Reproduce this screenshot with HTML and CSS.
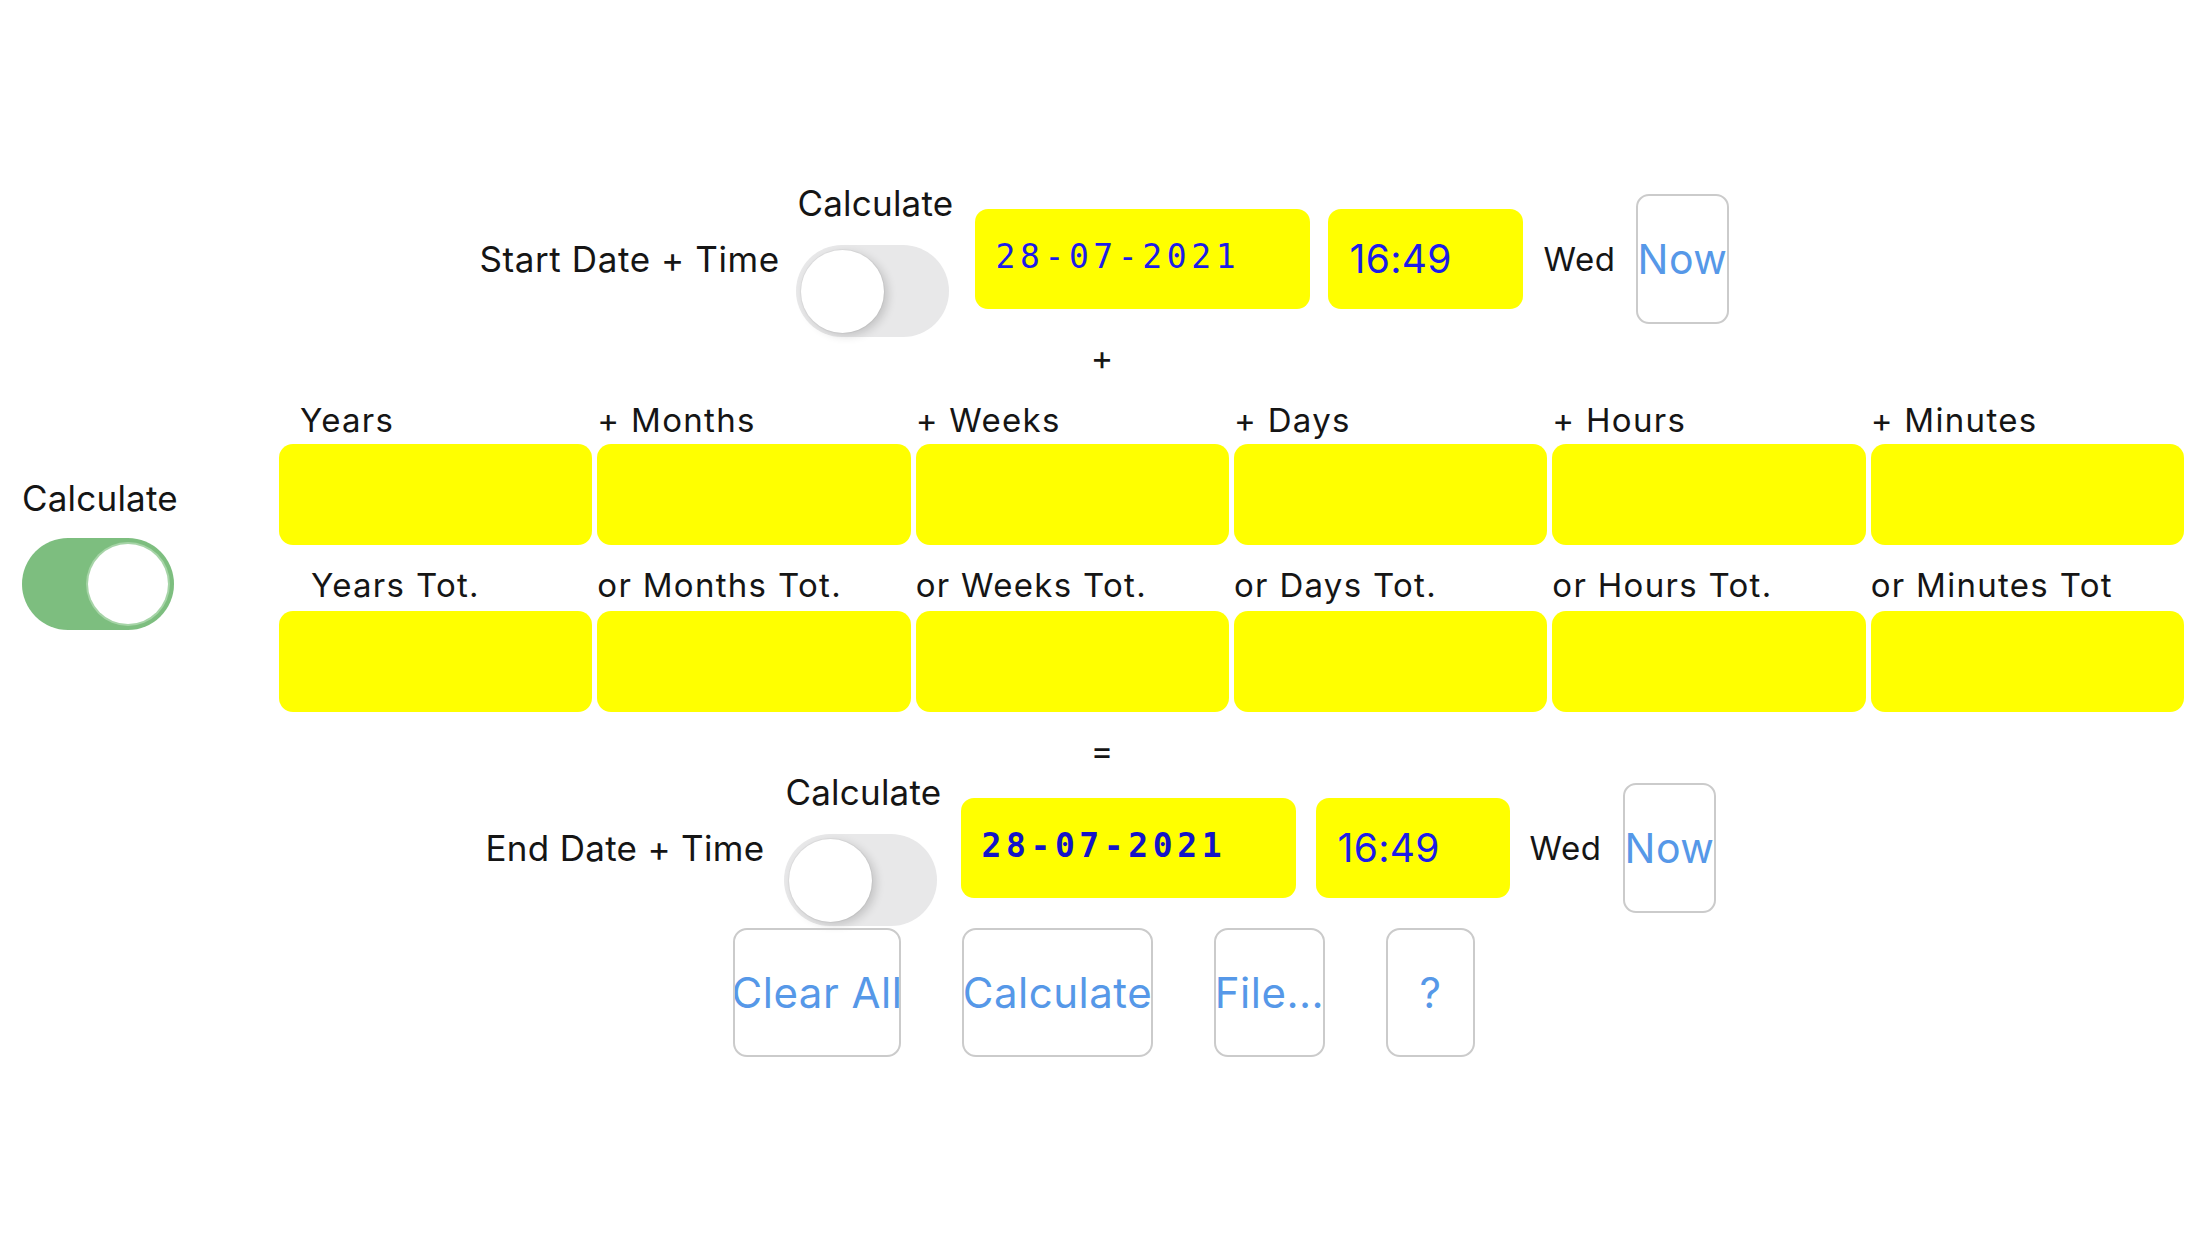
FILE: index.html
```html
<!DOCTYPE html>
<html lang="en">
<head>
<meta charset="utf-8">
<title>Date Calculator</title>
<link rel="stylesheet" href="styles.css">
</head>
<body>
<div class="page">
  <div class="dt-row start">
    <div class="dt-label">Start Date + Time</div>
    <div class="calc">
      <div class="calc-label">Calculate</div>
      <div class="switch"><span class="knob"></span></div>
    </div>
    <div class="date-box"><span class="date-text">28-07-2021</span></div>
    <div class="time-box"><span class="time-text">16:49</span></div>
    <div class="dow">Wed</div>
    <div class="now-btn"><span>Now</span></div>
  </div>

  <div class="op plus">+</div>

  <div class="dur">
    <div class="calc side">
      <div class="calc-label">Calculate</div>
      <div class="switch on"><span class="knob"></span></div>
    </div>
    <div class="grid">
      <div class="lbl first">Years</div>
      <div class="lbl">+ Months</div>
      <div class="lbl">+ Weeks</div>
      <div class="lbl">+ Days</div>
      <div class="lbl">+ Hours</div>
      <div class="lbl">+ Minutes</div>
      <div class="cell"></div>
      <div class="cell"></div>
      <div class="cell"></div>
      <div class="cell"></div>
      <div class="cell"></div>
      <div class="cell"></div>
      <div class="lbl tot firsttot">Years Tot.</div>
      <div class="lbl tot">or Months Tot.</div>
      <div class="lbl tot">or Weeks Tot.</div>
      <div class="lbl tot">or Days Tot.</div>
      <div class="lbl tot">or Hours Tot.</div>
      <div class="lbl tot">or Minutes Tot</div>
      <div class="cell"></div>
      <div class="cell"></div>
      <div class="cell"></div>
      <div class="cell"></div>
      <div class="cell"></div>
      <div class="cell"></div>
    </div>
  </div>

  <div class="op equals">=</div>

  <div class="dt-row end">
    <div class="dt-label">End Date + Time</div>
    <div class="calc">
      <div class="calc-label">Calculate</div>
      <div class="switch"><span class="knob"></span></div>
    </div>
    <div class="date-box"><span class="date-text bold">28-07-2021</span></div>
    <div class="time-box"><span class="time-text">16:49</span></div>
    <div class="dow">Wed</div>
    <div class="now-btn"><span>Now</span></div>
  </div>

  <div class="actions">
    <div class="btn w-clear"><span>Clear All</span></div>
    <div class="btn w-calc"><span>Calculate</span></div>
    <div class="btn w-file"><span>File...</span></div>
    <div class="btn w-help"><span>?</span></div>
  </div>
</div>
</body>
</html>
```

FILE: styles.css
```css
html, body {
  margin: 0;
  padding: 0;
  background: #ffffff;
}

body {
  font-family: "Inter", "Liberation Sans", sans-serif;
  color: #151515;
  width: 2208px;
  height: 1242px;
  overflow: hidden;
}

.page {
  padding-top: 180px;
  display: flex;
  flex-direction: column;
}

/* ---------- date/time rows ---------- */
.dt-row {
  display: flex;
  align-items: center;
  justify-content: center;
}

.dt-label {
  font-size: 35px;
  line-height: 46px;
  letter-spacing: 0.6px;
  text-align: right;
  white-space: nowrap;
}

.start .dt-label { width: 297px; }
.end .dt-label { width: 277px; letter-spacing: 0.3px; }

.calc {
  display: flex;
  flex-direction: column;
  align-items: flex-start;
  width: 157px;
}

.start .calc { margin-left: 19px; }
.end .calc { margin-left: 21px; }

.calc-label {
  font-size: 35px;
  line-height: 46px;
  letter-spacing: 0.2px;
  margin-left: 2px;
  margin-bottom: 19px;
  white-space: nowrap;
}

.switch {
  width: 153px;
  height: 92px;
  border-radius: 46px;
  background: #e8e8e9;
  display: flex;
  align-items: center;
  justify-content: flex-start;
  padding: 0 5px;
  box-sizing: border-box;
}

.switch .knob {
  width: 83px;
  height: 83px;
  border-radius: 50%;
  background: #ffffff;
  box-shadow: 0 0 0 1px rgba(0, 0, 0, 0.04), 4px 3px 10px rgba(0, 0, 0, 0.16);
}

.switch.on {
  background: #7dbe7f;
  justify-content: flex-end;
  padding: 0 6px;
  width: 152px;
}

.switch.on .knob {
  width: 80px;
  height: 80px;
  box-shadow: 0 0 0 2px #a6d4a7;
}

.date-box,
.time-box {
  height: 100px;
  background: #ffff00;
  border-radius: 13px;
  display: flex;
  align-items: center;
  box-sizing: border-box;
}

.date-box {
  width: 335px;
  padding-left: 21px;
}

.start .date-box { margin-left: 22px; }
.end .date-box { margin-left: 20px; }

.date-text {
  font-family: "DejaVu Sans Mono", "Liberation Mono", monospace;
  font-size: 33px;
  letter-spacing: 4.6px;
  color: #1c1ce8;
  margin-top: -4px;
}

.date-text.bold {
  font-weight: bold;
  color: #1414c8;
}

.time-box {
  width: 195px;
  padding-left: 22px;
}

.start .time-box { margin-left: 18px; }
.end .time-box { margin-left: 20px; width: 194px; }

.time-text {
  font-size: 39px;
  color: #1c1ce8;
  letter-spacing: 0.3px;
}

.dow {
  width: 72px;
  font-size: 33px;
  letter-spacing: 0.5px;
  text-align: center;
  white-space: nowrap;
}

.start .dow { margin-left: 21px; }
.end .dow { margin-left: 19px; width: 74px; }

.now-btn {
  width: 93px;
  height: 130px;
  border: 2px solid #cbcbcb;
  border-radius: 13px;
  box-sizing: border-box;
  overflow: hidden;
  display: flex;
  align-items: center;
  padding-left: 0;
  color: #5698e8;
  font-size: 41px;
  letter-spacing: 0.5px;
  white-space: nowrap;
}

.start .now-btn { margin-left: 20px; }
.end .now-btn { margin-left: 20px; }

/* ---------- operators ---------- */
.op {
  text-align: center;
  font-size: 34px;
  line-height: 30px;
  height: 30px;
  padding-right: 4px;
}

.plus { margin-top: 6px; }
.equals { margin-top: 24px; }

/* ---------- duration grid ---------- */
.dur {
  display: flex;
  align-items: flex-start;
  padding: 0 24px 0 22px;
  margin-top: 28px;
}

.calc.side {
  width: 257px;
  flex: none;
  margin-top: 74px;
}

.calc.side .calc-label {
  margin-left: 0;
  margin-bottom: 17px;
}

.grid {
  flex: 1;
  display: grid;
  grid-template-columns: repeat(6, 1fr);
  column-gap: 5px;
}

.lbl {
  font-size: 33px;
  line-height: 38px;
  letter-spacing: 1.3px;
  white-space: nowrap;
  margin-bottom: 5px;
}

.lbl.first { padding-left: 21px; }
.lbl.firsttot { padding-left: 32px; }

.lbl.tot {
  margin-top: 21px;
  margin-bottom: 7px;
}

.cell {
  height: 101px;
  background: #ffff00;
  border-radius: 14px;
}

/* ---------- end row ---------- */
.dt-row.end {
  margin-top: 3px;
  padding-right: 7px;
}

/* ---------- action buttons ---------- */
.actions {
  display: flex;
  justify-content: center;
  gap: 61px;
  margin-top: 2px;
}

.btn {
  height: 129px;
  border: 2px solid #cbcbcb;
  border-radius: 14px;
  box-sizing: border-box;
  display: flex;
  align-items: center;
  justify-content: center;
  overflow: hidden;
  color: #5698e8;
  font-size: 42px;
  letter-spacing: 0.5px;
  white-space: nowrap;
}

.w-clear { width: 168px; }
.w-calc { width: 191px; }
.w-file { width: 111px; }
.w-help { width: 89px; }
```
